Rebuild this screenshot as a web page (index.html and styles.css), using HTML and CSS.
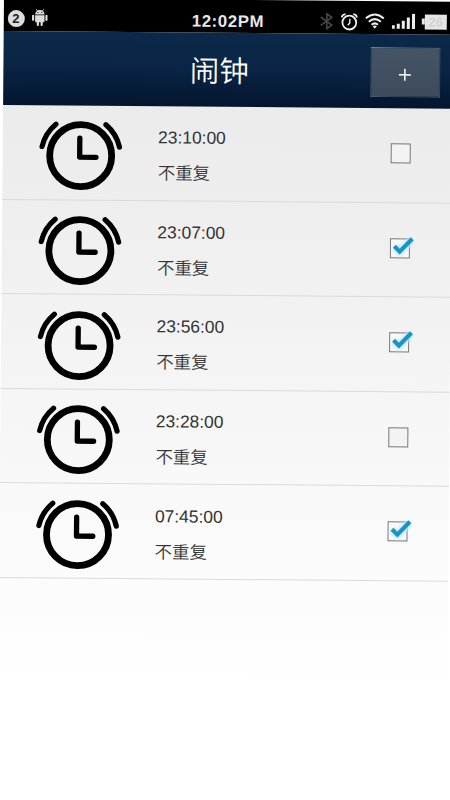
FILE: index.html
```html
<!DOCTYPE html>
<html lang="zh-CN">
<head>
<meta charset="utf-8">
<title>闹钟</title>
<link rel="stylesheet" href="styles.css">
</head>
<body>
<svg class="defs" width="0" height="0">
  <symbol id="clock" viewBox="-43 -37 86 74">
    <g fill="none" stroke="#000" stroke-linecap="round" stroke-linejoin="round">
      <circle r="31" stroke-width="6.8"/>
      <path d="M-1-17.5V1.5H15.300" stroke-width="5.300"/>
      <path d="M-38.7-8.800A41 41 0 0 1-25-31.2M25-31.2A41 41 0 0 1 38.7-8.800" stroke-width="5.200"/>
    </g>
    <path d="M0-3Q.5-.8 3.5 0H0Z"/>
  </symbol>
  <symbol id="box" viewBox="0 0 28 26">
    <rect x="1.5" y="3.5" width="19" height="19" fill="#f3f3f3" stroke="#777"/>
  </symbol>
  <symbol id="checked" viewBox="0 0 28 26">
    <path d="M1.5 3.5H20.5V22.5H1.5Z" fill="#f8f8f8" stroke="#777"/>
    <path class="glow" d="M6 11.5 11 16.5 22.5 4.3"/>
    <path d="M5.4 11 10.8 16.300 23.3 3.400" fill="none" stroke="#1b93c4" stroke-width="4.2"/>
  </symbol>
</svg>
<div class="screen">
  <div class="status">
    <span class="count">2</span>
    <svg class="android" width="16" height="18" viewBox="0 0 16 18" fill="#ddd">
      <path d="M3.3 6.2A4.7 4.5 0 0 1 12.7 6.2ZM3.3 7H12.7V13.2Q12.7 14 11.9 14H4.1Q3.3 14 3.3 13.2Z"/>
      <path d="M4.3.8 5.6 2.8M11.7.8 10.4 2.8" stroke="#ddd" stroke-width=".8"/>
      <path d="M1.3 7.5V11.6M14.7 7.5V11.6M6.1 13V16.7M9.9 13V16.7" stroke="#ddd" stroke-width="2.2" stroke-linecap="round"/>
      <path d="M5.6 3.8H6.6V4.8H5.6ZM9.4 3.8H10.4V4.8H9.4Z" fill="#000"/>
    </svg>
    <span class="now">12:02PM</span>
    <svg class="bt" width="14" height="17" viewBox="0 0 14 17" fill="none" stroke="#444" stroke-width="1.7"><path d="M1 4.3 12 12.3 7 16V1L12 4.7 1 12.7"/></svg>
    <svg class="bell" width="17" height="18" viewBox="0 0 17 18" fill="none" stroke="#eee" stroke-width="1.8"><circle cx="8.5" cy="9.7" r="6.9"/><path d="M9 5.8V10L7 12.3" stroke-width="1.4"/><path d="M.9 4.6Q1.3 1.6 4.6 1.2M12.4 1.2Q15.7 1.6 16.1 4.6" /></svg>
    <svg class="wifi" width="20" height="16" viewBox="0 0 20 16" fill="none" stroke="#eee" stroke-width="2"><path d="M1 5.3Q10-2.5 19 5.3M4 8.7Q10 3.4 16 8.7M6.8 11.6Q10 8.9 13.2 11.6"/><path d="M7.9 13.2Q10 11.7 12.1 13.2L10 15.6Z" fill="#eee" stroke="none"/></svg>
    <svg class="signal" width="24" height="16" viewBox="0 0 24 16" fill="#eee"><path d="M0 12H3V15.500H0ZM5 10.500H8V15.500H5ZM10 7.500H13V15.500H10ZM15 4H18V15.500H15ZM20.200 .3H23.200V15.500H20.200Z"/></svg>
    <span class="battery">26</span>
  </div>
  <header class="bar">
    <h1 class="title">闹钟</h1>
    <button class="add" aria-label="+"><svg width="13" height="13" viewBox="0 0 13 13"><path d="M6.500 .5V12.500M.5 6.500H12.500" stroke="#fff" stroke-width="1.500"/></svg></button>
  </header>
  <main class="list">
    <div class="row"><svg class="clock"><use href="#clock"/></svg><div class="info"><div class="time">23:10:00</div><div class="repeat">不重复</div></div><svg class="check"><use href="#box"/></svg></div>
    <div class="row"><svg class="clock"><use href="#clock"/></svg><div class="info"><div class="time">23:07:00</div><div class="repeat">不重复</div></div><svg class="check"><use href="#checked"/></svg></div>
    <div class="row"><svg class="clock"><use href="#clock"/></svg><div class="info"><div class="time">23:56:00</div><div class="repeat">不重复</div></div><svg class="check"><use href="#checked"/></svg></div>
    <div class="row"><svg class="clock"><use href="#clock"/></svg><div class="info"><div class="time">23:28:00</div><div class="repeat">不重复</div></div><svg class="check"><use href="#box"/></svg></div>
    <div class="row"><svg class="clock"><use href="#clock"/></svg><div class="info"><div class="time">07:45:00</div><div class="repeat">不重复</div></div><svg class="check"><use href="#checked"/></svg></div>
  </main>
</div>
</body>
</html>
```
FILE: styles.css
```css
* { box-sizing: border-box; }
html, body { margin: 0; height: 800px; overflow: hidden; background: #fff; }
body { display: flow-root; font-family: "Liberation Sans", "Noto Sans CJK SC", sans-serif; }
.defs { display: block; }
.screen {
  width: 449px;
  height: 810px;
  margin: -2px 0 0 4px;
  transform: rotate(.48deg);
  transform-origin: 0 0;
  background: linear-gradient(#ebebeb 100px, #eee 200px, #f9f9f9 500px, #fff 690px);
}
.status {
  display: flex;
  align-items: flex-start;
  height: 33px;
  padding-top: 9px;
  background: #000;
  color: #e8e8e8;
}
.status > * { flex: none; }
.count {
  width: 17px;
  height: 17px;
  margin: 3px 0 0 3.500px;
  border-radius: 50%;
  background: #ddd;
  color: #222;
  font: bold 13px/17px "Liberation Sans", sans-serif;
  text-align: center;
}
.android { margin: 1px 0 0 7.300px; }
.now {
  width: 76px;
  margin: 3.500px 0 0 144.200px;
  font: bold 16.800px/18px "Liberation Sans", sans-serif;
  letter-spacing: .6px;
}
.bt { margin: 3px 0 0 52.500px; }
.bell { margin: 2.500px 0 0 6.800px; }
.wifi { margin: 3px 0 0 7px; }
.signal { margin: 3px 0 0 6.600px; }
.battery {
  position: relative;
  width: 22px;
  height: 14.500px;
  margin: 4px 0 0 9px;
  background: #e6e6e6;
  color: #d2d2d2;
  font: bold 13px/15px "Liberation Sans", sans-serif;
  text-align: center;
}
.battery::before {
  content: "";
  position: absolute;
  left: -3px;
  top: 4px;
  width: 3px;
  height: 6px;
  background: #e6e6e6;
}
.bar {
  display: grid;
  grid-template-columns: 366.800px 70px;
  height: 73.500px;
  background: linear-gradient(#0c2949, #0a2546 45%, #04152e);
}
.title {
  margin: 13.500px 0 0 186.500px;
  color: #fff;
  font: 350 29.500px/44px "Noto Sans CJK SC", sans-serif;
}
.add {
  display: grid;
  place-items: center;
  height: 50px;
  margin-top: 12.500px;
  padding: 5px 0 0;
  border: 1px solid #4d5b6b;
  border-top-color: #738090;
  border-radius: 1px;
  background: linear-gradient(#465566, #3d4b5d);
}
.list { padding-top: .6px; }
.row {
  display: grid;
  grid-template-columns: 155.300px 232px 28px;
  align-items: start;
  height: 94.600px;
  border-bottom: 1px solid #dadada;
}
.clock { width: 86px; height: 74px; margin: 13.400px 0 0 34.600px; }
.info { padding-top: 20.200px; color: #333; }
.time { font-size: 17.400px; line-height: 22px; }
.repeat { margin-top: 11px; font: 350 17.400px/26px "Noto Sans CJK SC", sans-serif; }
.check { width: 28px; height: 26px; margin-top: 31.900px; overflow: visible; }
.glow { fill: none; stroke: #bfeaff; stroke-width: 7; filter: blur(1.500px); }
```
